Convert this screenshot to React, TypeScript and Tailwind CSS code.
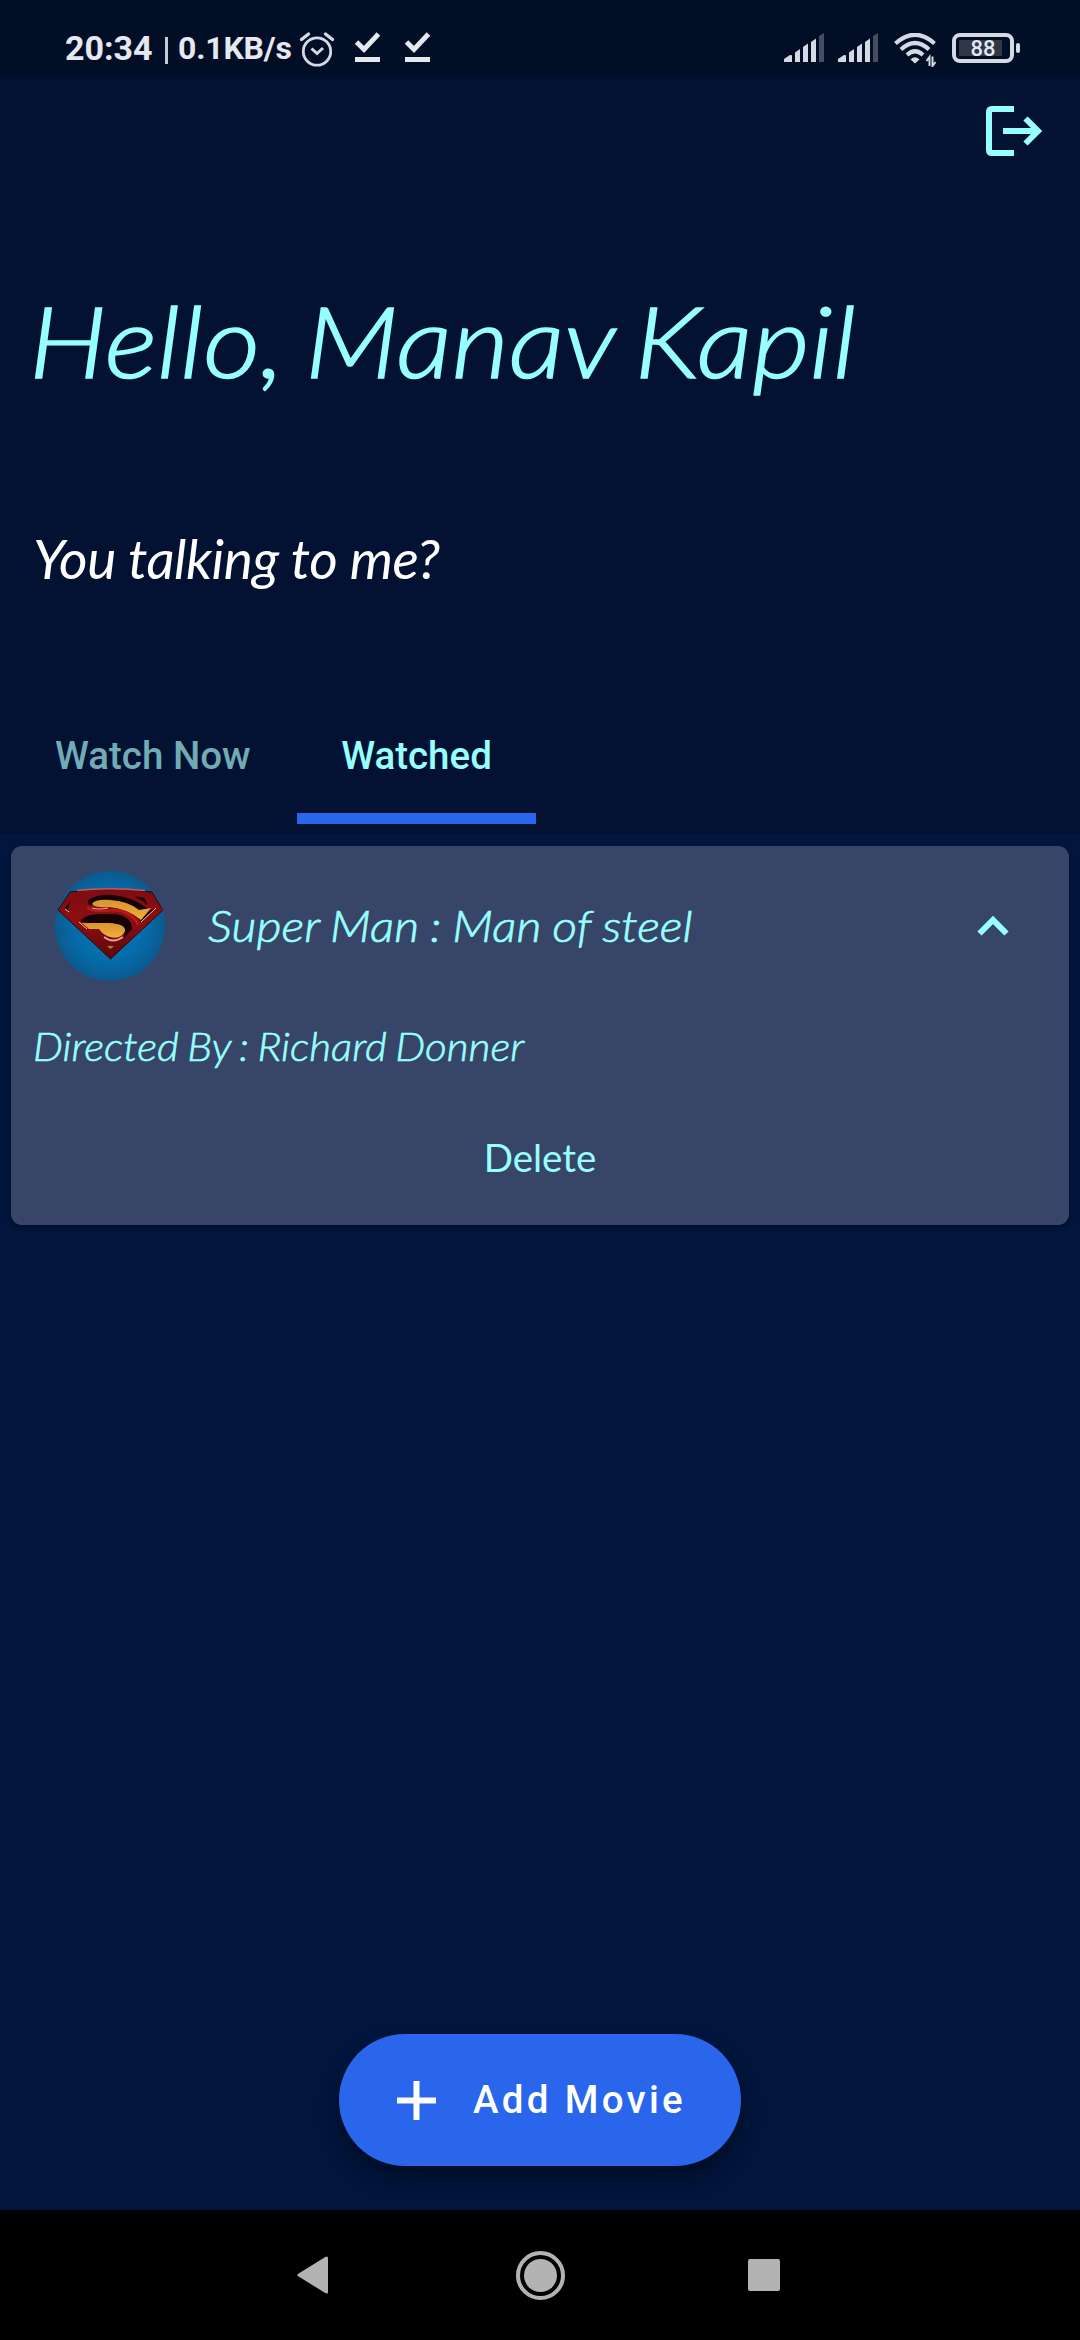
const HEADING = 'font-["Lato",sans-serif] italic text-[#97fffe] whitespace-nowrap origin-left';

function Signal() {
  return (
    <svg width="40" height="30" viewBox="0 0 40 30">
      <g fill="#d5d9e4">
        <path d="M0 29V26L6 22Q8 21.500 8 23V29Z" />
        <path d="M11 29V19.500L16 16V29Z" />
        <path d="M19 29V14L24 10.500V29Z" />
        <path d="M27 29V9L32 5.500V29Z" />
      </g>
      <path d="M35 29V3L40 0V29Z" fill="#464c61" />
    </svg>
  );
}

function DownloadDone() {
  return (
    <svg width="25" height="31" viewBox="0 0 25 31">
      <path d="M1.500 10L9 17.500L23.500 2" fill="none" stroke="#e6e8f0" strokeWidth="5" />
      <path d="M0 25H25V30H0Z" fill="#e6e8f0" />
    </svg>
  );
}

function StatusBar() {
  return (
    <div className="flex h-[76px] items-start bg-[#010e26] font-[Roboto,sans-serif] font-bold text-[#e6e8f0]">
      <span className="mt-[28px] ml-[65px] w-[89px] text-[34px] leading-[40px]">20:34</span>
      <span className="mt-[37px] ml-[11px] h-[27px] w-[3px] bg-[#c5c9d4]" />
      <span className="mt-[29px] ml-[10px] w-[113px] text-[32px] leading-[38px] tracking-[-0.2px]">0.1KB/s</span>
      <svg className="mt-[31px] ml-[8px]" width="36" height="36" viewBox="0 0 36 36" fill="none" stroke="#d5d9e4">
        <circle cx="18" cy="20.500" r="13.700" strokeWidth="2.800" />
        <path d="M12.500 17.500L18 22.500L24 17" strokeWidth="3" />
        <path d="M2.500 8.500L9.500 3M33.500 8.500L26.500 3" strokeWidth="3.400" strokeLinecap="round" />
      </svg>
      <div className="mt-[32px] ml-[20px] flex gap-[25px]">
        <DownloadDone />
        <DownloadDone />
      </div>
      <div className="mt-[33px] mr-[59px] ml-auto flex">
        <Signal />
        <div className="w-[14px]" />
        <Signal />
        <svg className="ml-[16px]" width="43" height="34" viewBox="0 0 43 34" fill="none" stroke="#d5d9e4">
          <path d="M1.500 10.500Q21 -7 40.500 10.500" strokeWidth="4.200" />
          <path d="M7 16.500Q21 3.500 35 16.500" strokeWidth="4.200" />
          <path d="M13 22Q21 14.500 29 22" strokeWidth="4.200" />
          <path d="M16.500 26.500Q21 22 25.500 26.500L21 30.500Z" fill="#d5d9e4" stroke="none" />
          <path d="M35.500 33V24L32.500 28M38.500 23.500V33L41.500 29" strokeWidth="2" />
        </svg>
        <svg className="ml-[15px]" width="69" height="30" viewBox="0 0 69 30">
          <rect x="7" y="7" width="43" height="16" fill="#303848" />
          <rect x="2" y="2" width="58" height="26" rx="6" fill="none" stroke="#d5d9e4" strokeWidth="4" />
          <rect x="64" y="10" width="4" height="10" rx="2" fill="#d5d9e4" />
          <text x="31" y="23" textAnchor="middle" fontSize="22" fontFamily="Roboto" fontWeight="500" fill="#e6e8f0">88</text>
        </svg>
      </div>
    </div>
  );
}

function Shield() {
  return (
    <svg width="110" height="110" viewBox="0 0 110 110" className="rounded-full">
      <defs>
        <radialGradient id="sky">
          <stop offset="0" stopColor="#0080c4" />
          <stop offset="0.700" stopColor="#0669a6" />
          <stop offset="1" stopColor="#0b5a8e" />
        </radialGradient>
        <linearGradient id="red" x1="0" y1="0" x2="0" y2="1">
          <stop offset="0" stopColor="#7d0d12" />
          <stop offset="0.450" stopColor="#8e0e12" />
          <stop offset="1" stopColor="#5d0609" />
        </linearGradient>
        <linearGradient id="gold" x1="0" y1="0" x2="0" y2="1">
          <stop offset="0" stopColor="#d8952c" />
          <stop offset="1" stopColor="#f0ae3c" />
        </linearGradient>
      </defs>
      <rect width="110" height="110" fill="url(#sky)" />
      <path d="M15 21Q55 15 97 21L108 39L55.500 88L3 39Z" fill="url(#red)" stroke="#2c080b" strokeWidth="1" />
      <path d="M22 19.500Q55 16 90 19.500" fill="none" stroke="#cf5a55" strokeWidth="1.400" />
      <path d="M17 29L9.500 37L13 41Q13 34 17 29Z" fill="#1d0405" />
      <path d="M80 26Q87 25 91 29L92 34Q87 29 80 26ZM101 37L85 52Q90 40 101 37Z" fill="#1d0405" />
      <path d="M33 29Q42 23 58 24Q78 26 93 38L86 50Q74 38 56 34Q40 36 33 33Z" fill="#160305" />
      <path d="M37 33Q40 28 55 29Q73 30 84 39L96 37L86 49Q71 37 54 36Q40 37 37 33Z" fill="url(#gold)" />
      <path d="M25 50Q32 42 48 43H61Q77 46 77 58L68 68Q73 58 62 54Q42 56 25 50Z" fill="#160305" />
      <path d="M27 52H54Q71 53 70 60Q66 69 55 66Q48 64 44 58L34 58Z" fill="url(#gold)" />
      <path d="M32 36Q38 42 59 39Q78 41 83 54" fill="none" stroke="#b51a18" strokeWidth="2.500" />
      <path d="M37 37Q44 39 53 37" fill="none" stroke="#e8a39a" strokeWidth="1.200" />
      <path d="M49 66Q58 73 68 66" fill="none" stroke="#dfa39a" strokeWidth="1.800" />
      <path d="M52 75L59 75L55.500 78Z" fill="#b67d20" />
      <path d="M101 37L86 51M24 51L32 58M10 38L14 41" stroke="#f1cf7b" strokeWidth="1" />
    </svg>
  );
}

export default function App() {
  return (
    <div className="flex h-[2340px] w-[1080px] flex-col overflow-hidden bg-[#01153d]">
      <StatusBar />
      <div className="flex h-[758px] flex-col bg-[#031233]">
        <button className="mt-[30px] mr-[38px] h-[50px] w-[56px] self-end">
          <svg width="56" height="50" viewBox="0 0 56 50" fill="none" stroke="#97fffe" strokeWidth="6">
            <path d="M28 3H6Q3 3 3 6V44Q3 47 6 47H28" />
            <path d="M17 25H51M39.500 12.500L52 25L39.500 37.500" />
          </svg>
        </button>
        <h1 className={`${HEADING} mt-[124px] ml-[29px] scale-x-[1.12] self-start text-[99px] leading-[120px] font-light [word-spacing:-6px] [-webkit-text-stroke:1.6px_#97fffe]`}>
          Hello, Manav Kapil
        </h1>
        <p className='mt-[125px] ml-[33px] font-["Lato",sans-serif] text-[55px] leading-[66px] tracking-[-0.45px] text-white italic'>
          You talking to me?
        </p>
        <div className="mt-[92px] flex h-[141px] font-[Roboto,sans-serif] text-[38.5px] leading-[46px] font-medium">
          <div className="w-[297px] pt-[50px] pl-[55px] text-[#71acb6]">Watch Now</div>
          <div className="flex w-[239px] flex-col items-center pt-[50px] text-[#97fffe]">
            Watched
            <span className="mt-[34px] h-[11px] w-full shrink-0 bg-[#2966ec]" />
          </div>
        </div>
      </div>
      <div className="mx-[11px] mt-[12px] flex h-[379px] flex-col rounded-[11px] bg-[#374668] shadow-[0_2px_4px_rgba(0,0,0,0.45)]">
        <div className="flex h-[160px] items-center pl-[44px]">
          <Shield />
          <h2 className={`${HEADING} -mt-[3px] ml-[43px] scale-x-[1.113] text-[43.500px] leading-[52px] font-light [word-spacing:-1.2px] [-webkit-text-stroke:0.7px_#97fffe]`}>
            Super Man : Man of steel
          </h2>
          <svg className="mr-[60px] ml-auto" width="32" height="22" viewBox="0 0 32 22">
            <path d="M2.500 18.500L16 5L29.500 18.500" fill="none" stroke="#97fffe" strokeWidth="6" />
          </svg>
        </div>
        <p className={`${HEADING} mt-[17px] ml-[22px] scale-x-[1.1] self-start text-[38.500px] leading-[46px] font-light [word-spacing:-2px] [-webkit-text-stroke:0.6px_#97fffe]`}>
          Directed By : Richard Donner
        </p>
        <button className='mt-[65px] self-center font-["Lato",sans-serif] text-[38.5px] leading-[46px] text-[#97fffe]'>
          Delete
        </button>
      </div>
      <button className="mt-auto mb-[44px] flex h-[132px] w-[402px] shrink-0 items-center self-center rounded-full bg-[#2966ec] pl-[58px] font-[Roboto,sans-serif] text-[38.5px] font-medium tracking-[3.3px] text-white shadow-[0_12px_20px_rgba(0,0,0,0.4)]">
        <svg width="39" height="39" viewBox="0 0 39 39">
          <path d="M0 19.500H39M19.500 0V39" stroke="white" strokeWidth="6" />
        </svg>
        <span className="ml-[37px]">Add Movie</span>
      </button>
      <div className="flex h-[130px] shrink-0 items-center bg-black pl-[297px]">
        <svg width="32" height="38" viewBox="0 0 32 38">
          <path d="M2 19L29.500 2V36Z" fill="#b3b3b3" stroke="#b3b3b3" strokeWidth="3" strokeLinejoin="round" />
        </svg>
        <svg className="ml-[187px]" width="49" height="49" viewBox="0 0 49 49">
          <circle cx="24.500" cy="24.500" r="22.500" fill="none" stroke="#b3b3b3" strokeWidth="4" />
          <circle cx="24.500" cy="24.500" r="16.500" fill="#b3b3b3" />
        </svg>
        <span className="ml-[183px] size-[32px] rounded-[2px] bg-[#b3b3b3]" />
      </div>
    </div>
  );
}
